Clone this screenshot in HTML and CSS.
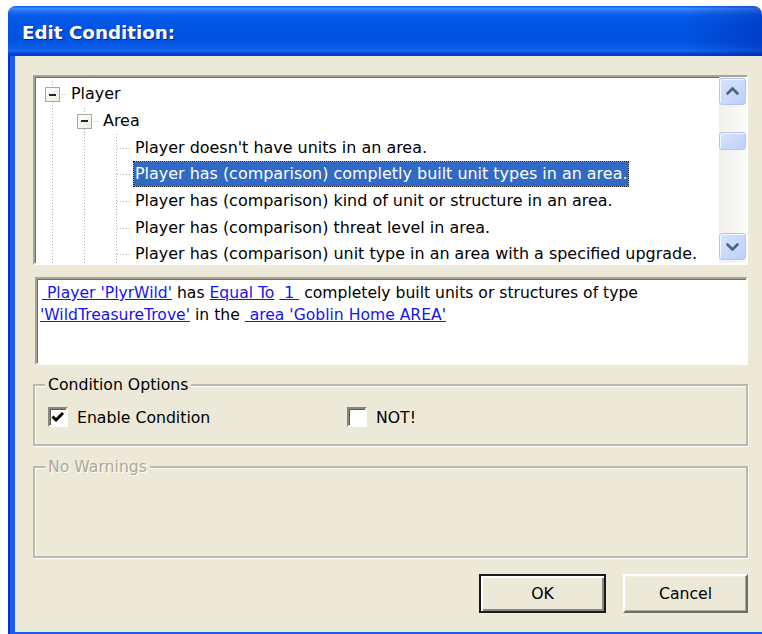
FILE: index.html
```html
<!DOCTYPE html>
<html lang="en">
<head>
<meta charset="utf-8">
<title>Edit Condition</title>
<link rel="stylesheet" href="styles.css">
</head>
<body>
<div class="window">
  <div class="titlebar">Edit Condition:</div>
  <div class="client">
    <div class="content">

      <div class="tree">
        <div class="tree-items">
          <div class="row">
            <span class="cell tee top"><span class="expander"></span></span>
            <span class="label">Player</span>
          </div>
          <div class="row">
            <span class="cell pipe"></span>
            <span class="cell tee top"><span class="expander"></span></span>
            <span class="label">Area</span>
          </div>
          <div class="row">
            <span class="cell pipe"></span>
            <span class="cell pipe"></span>
            <span class="cell tee"></span>
            <span class="label">Player doesn't have units in an area.</span>
          </div>
          <div class="row">
            <span class="cell pipe"></span>
            <span class="cell pipe"></span>
            <span class="cell tee"></span>
            <span class="label selected">Player has (comparison) completly built unit types in an area.</span>
          </div>
          <div class="row">
            <span class="cell pipe"></span>
            <span class="cell pipe"></span>
            <span class="cell tee"></span>
            <span class="label">Player has (comparison) kind of unit or structure in an area.</span>
          </div>
          <div class="row">
            <span class="cell pipe"></span>
            <span class="cell pipe"></span>
            <span class="cell tee"></span>
            <span class="label">Player has (comparison) threat level in area.</span>
          </div>
          <div class="row">
            <span class="cell pipe"></span>
            <span class="cell pipe"></span>
            <span class="cell tee"></span>
            <span class="label">Player has (comparison) unit type in an area with a specified upgrade.</span>
          </div>
        </div>
        <div class="vscroll">
          <div class="sb-btn">
            <svg width="25" height="25" viewBox="0 0 25 25"><polyline points="7.5,14.5 12.5,9.5 17.5,14.5" fill="none" stroke="#4D6185" stroke-width="2.6" stroke-linecap="round" stroke-linejoin="round"/></svg>
          </div>
          <div class="sb-track"><div class="sb-thumb"></div></div>
          <div class="sb-btn">
            <svg width="25" height="25" viewBox="0 0 25 25"><polyline points="7.5,10.5 12.5,15.5 17.5,10.5" fill="none" stroke="#4D6185" stroke-width="2.6" stroke-linecap="round" stroke-linejoin="round"/></svg>
          </div>
        </div>
      </div>

      <div class="desc">
        <a class="lead" href="#">&nbsp;Player 'PlyrWild'</a> has <a href="#">Equal To</a> <a href="#">&nbsp;1&nbsp;</a> completely built units or structures of type<br>
        <a href="#">'WildTreasureTrove'</a> in the <a href="#">&nbsp;area 'Goblin Home AREA'</a>
      </div>

      <fieldset class="group options">
        <legend>Condition Options</legend>
        <div class="checks">
          <label class="check first">
            <span class="box"><svg width="16" height="16" viewBox="0 0 16 16"><polyline points="2.5,7.5 6,11 13,4" fill="none" stroke="#000" stroke-width="3"/></svg></span>
            <span>Enable Condition</span>
          </label>
          <label class="check">
            <span class="box"></span>
            <span>NOT!</span>
          </label>
        </div>
      </fieldset>

      <fieldset class="group warnings">
        <legend>No Warnings</legend>
        <div class="warn-body"></div>
      </fieldset>

      <div class="buttons">
        <button class="btn default" type="button">OK</button>
        <button class="btn" type="button">Cancel</button>
      </div>

    </div>
  </div>
</div>
</body>
</html>
```

FILE: styles.css
```css
html, body {
  margin: 0;
  height: 100%;
  overflow: hidden;
  background: #fff;
}

body {
  font-family: "DejaVu Sans", "Liberation Sans", sans-serif;
  font-size: 15.7px;
  color: #000;
}

/* window: blue frame on the left and bottom only, the right edge is cut off by the page */
.window {
  margin: 6px 0 0 8px;
  width: 754px;
  border-radius: 8px 8px 0 0;
  overflow: hidden;
  background:
    linear-gradient(to right, #0A2ECF 0 2px, #1A5CEF 2px 7px, transparent 7px),
    linear-gradient(to top, #1A5CEF 0 2px, #ECE9D8 2px);
}

.titlebar {
  height: 50px;
  box-sizing: border-box;
  padding: 2px 0 0 14px;
  display: flex;
  align-items: center;
  color: #fff;
  font-weight: bold;
  font-size: 18.3px;
  text-shadow: 1px 1px 0 #0A1F8A;
  border-radius: 8px 8px 0 0;
  background:
    linear-gradient(to right, rgba(0, 20, 140, 0) 90%, rgba(0, 25, 150, 0.35) 100%),
    linear-gradient(to bottom,
      #0A5AE8 0%, #3B8CFA 5%, #2274F6 10%, #0A5DEA 18%, #0055E5 35%,
      #0052E1 70%, #0A5CE9 84%, #1466F0 89%, #0047D6 95%, #0A38B8 100%);
}

.client {
  margin: 0 0 2px 7px;
  height: 576px;
  box-sizing: border-box;
  padding: 19px 0 0 18px;
  background: #ECE9D8;
}

.content {
  width: 715px;
}

/* tree view */
.tree {
  height: 190px;
  box-sizing: border-box;
  display: flex;
  background: #fff;
  border: 2px solid;
  border-color: #A7A496 #FFFFFF #FFFFFF #A7A496;
  box-shadow: inset 1px 1px 0 #716F64;
}

.tree-items {
  flex: 1;
  overflow: hidden;
  padding: 4px 0 0 1px;
  font-size: 15.95px;
}

.row {
  display: flex;
  align-items: center;
  height: 26.67px;
  white-space: nowrap;
}

.cell {
  position: relative;
  flex: 0 0 32px;
  align-self: stretch;
}

.cell::before,
.cell::after {
  content: "";
  position: absolute;
}

/* vertical connector */
.pipe::before,
.tee::before {
  left: 16px;
  top: 0;
  bottom: 0;
  width: 1px;
  background: linear-gradient(to bottom, #AEAEAE 0 1.5px, transparent 1.5px 3px);
  background-size: 1px 3px;
}

/* horizontal branch */
.tee::after {
  left: 17px;
  right: 0;
  top: 50%;
  height: 1px;
  background: linear-gradient(to right, #AEAEAE 0 1.5px, transparent 1.5px 3px);
  background-size: 3px 1px;
}

.expander {
  position: absolute;
  left: 9px;
  top: calc(50% - 7px);
  width: 15px;
  height: 15px;
  box-sizing: border-box;
  border: 1px solid #ABA899;
  background: linear-gradient(to bottom right, #FFFFFF, #ECEAE0);
  z-index: 1;
}

.expander::after {
  content: "";
  position: absolute;
  left: 3px;
  right: 3px;
  top: 5.5px;
  height: 2px;
  background: #222;
}

.label {
  margin-left: 1px;
  padding: 0 1px;
  line-height: 24px;
  border: 1px solid transparent;
}

.label.selected {
  color: #fff;
  border: 1px dotted #1A1A1A;
  background:
    linear-gradient(#316AC5, #316AC5) padding-box,
    #D9A441 border-box;
}

/* scrollbar */
.vscroll {
  flex: 0 0 27px;
  display: flex;
  flex-direction: column;
  padding: 1px 0 3px;
  background: linear-gradient(to right, #F1F0EA, #FBFBF8);
}

.sb-btn,
.sb-thumb {
  box-sizing: border-box;
  border: 1px solid #B3C5F0;
  border-radius: 3px;
  background: linear-gradient(to bottom right, #D8E4FE, #BDCFFA);
  box-shadow: inset 1px 1px 0 #F3F7FF;
}

.sb-btn {
  height: 27px;
  display: flex;
  align-items: center;
  justify-content: center;
}

.sb-track {
  flex: 1;
}

.sb-thumb {
  margin-top: 27px;
  height: 18px;
}

/* description pane */
.desc {
  margin: 12px 0 0 2px;
  height: 88px;
  box-sizing: border-box;
  padding: 3px 0 0 3px;
  line-height: 22px;
  font-size: 15.6px;
  background: #fff;
  border: 2px solid;
  border-color: #A7A496 #FFFFFF #FFFFFF #A7A496;
  box-shadow: inset 1px 1px 0 #716F64;
  white-space: nowrap;
}

.desc a {
  color: #1414F5;
  text-decoration: underline;
}

.desc a.lead {
  margin-left: 2px;
}

/* group boxes */
.group {
  margin: 0;
  min-width: 0;
  border: 2px solid #BDB9A9;
  box-shadow: inset 1px 1px 0 #FFFFFF, 1px 1px 0 #FFFFFF;
  padding: 12px 10px 17px 10px;
}

.group legend {
  padding: 0 3px;
  line-height: 20px;
  background: #ECE9D8;
}

.options {
  margin-top: 10px;
}

.warnings {
  margin-top: 11px;
  padding: 0 10px;
}

.warnings legend {
  color: #ACA899;
  text-shadow: 1px 1px 0 #FFFFFF;
}

.warn-body {
  height: 79px;
}

.checks {
  display: flex;
  align-items: center;
  height: 20px;
}

.check {
  display: flex;
  align-items: center;
  gap: 9px;
}

.check.first {
  margin-left: 3px;
  width: 299px;
}

.box {
  width: 20px;
  height: 20px;
  box-sizing: border-box;
  border: 2px solid;
  border-color: #8A877A #FFFFFF #FFFFFF #8A877A;
  box-shadow: inset 1px 1px 0 #5E5C52;
  background: #fff;
  display: flex;
  align-items: center;
  justify-content: center;
}

/* dialog buttons */
.buttons {
  margin-top: 16px;
  display: flex;
  justify-content: flex-end;
  gap: 17px;
}

.btn {
  height: 39px;
  width: 125px;
  font: inherit;
  color: #000;
  background: #ECE9D8;
  border: 2px solid;
  border-color: #FFFFFF #716F64 #716F64 #FFFFFF;
  box-shadow: inset -1px -1px 0 #ACA899, inset 1px 1px 0 #F1EFE2;
  padding: 0;
}

.btn.default {
  width: 127px;
  border: 2px solid #1A1A1A;
  box-shadow: inset 2px 2px 0 #FFFFFF, inset -2px -2px 0 #8A877A;
}
```
